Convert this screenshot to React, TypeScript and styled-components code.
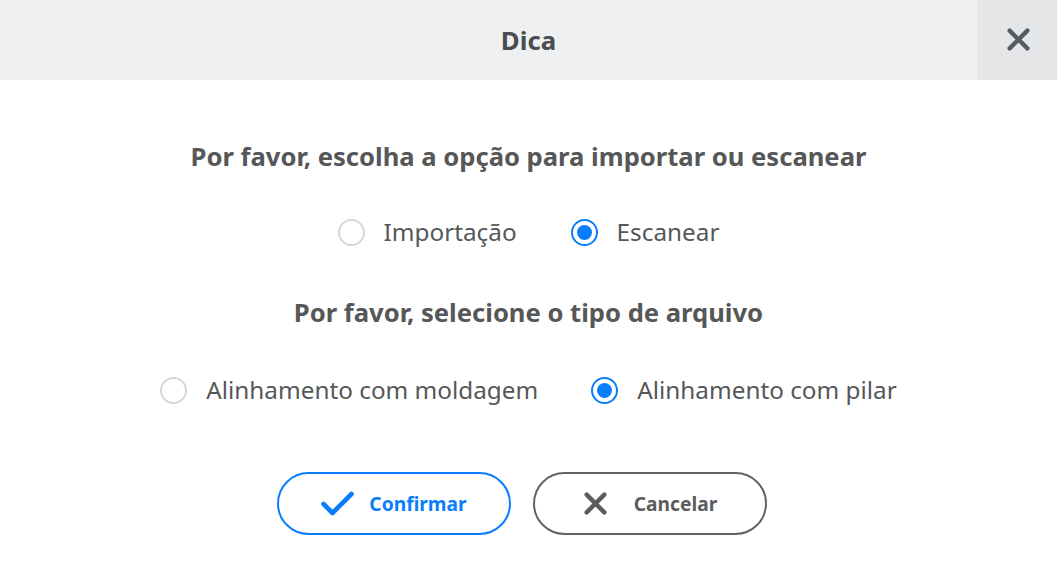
import React, { useState } from "react";
import styled, { createGlobalStyle } from "styled-components";

const Blue = "#0a7dfb";
const Text = "#555759";

const GlobalStyle = createGlobalStyle`
  html, body {
    margin: 0;
    padding: 0;
    background: #ffffff;
    font-family: "Noto Sans", "Open Sans", sans-serif;
  }
`;

const Dialog = styled.div`
  width: 1057px;
  height: 568px;
  display: flex;
  flex-direction: column;
  background: #ffffff;
`;

const Header = styled.div`
  height: 80px;
  display: flex;
  align-items: center;
  justify-content: center;
  position: relative;
  background: #eff0f2;
`;

const Title = styled.span`
  font-size: 25.8px;
  font-weight: 700;
  color: #4a4c4f;
`;

const CloseButton = styled.button`
  position: absolute;
  top: 0;
  right: 0;
  width: 80px;
  height: 80px;
  border: none;
  background: #e5e6e8;
  display: flex;
  align-items: center;
  justify-content: center;
  cursor: pointer;
  padding: 0 0 2px 2px;
`;

const Body = styled.div`
  display: flex;
  flex-direction: column;
  align-items: center;
  padding-top: 57px;
`;

const SectionTitle = styled.div<{ $mt?: number }>`
  font-size: 25.6px;
  font-weight: 700;
  color: ${Text};
  line-height: 40px;
  margin-top: ${(p) => p.$mt ?? 0}px;
`;

const RadioRow = styled.div<{ $gap: number; $mt: number }>`
  display: flex;
  align-items: center;
  gap: ${(p) => p.$gap}px;
  margin-top: ${(p) => p.$mt}px;
`;

const RadioLabel = styled.label`
  display: flex;
  align-items: center;
  gap: 19px;
  font-size: 24.3px;
  color: ${Text};
  cursor: pointer;
  line-height: 40px;
`;

const RadioCircle = styled.span<{ $checked: boolean }>`
  width: 27px;
  height: 27px;
  box-sizing: border-box;
  border-radius: 50%;
  border: 2px solid ${(p) => (p.$checked ? Blue : "#d4d6d9")};
  display: flex;
  align-items: center;
  justify-content: center;
  &::after {
    content: "";
    width: 15px;
    height: 15px;
    border-radius: 50%;
    background: ${Blue};
    display: ${(p) => (p.$checked ? "block" : "none")};
  }
`;

const Buttons = styled.div`
  display: flex;
  gap: 22px;
  margin-top: 62px;
  margin-right: 13px;
`;

const Button = styled.button<{ $primary?: boolean; $gap: number }>`
  width: 234px;
  height: 63px;
  box-sizing: border-box;
  border-radius: 32px;
  background: #ffffff;
  border: 2px solid ${(p) => (p.$primary ? Blue : "#5f6368")};
  color: ${(p) => (p.$primary ? Blue : "#5a5c5f")};
  font-family: inherit;
  font-size: 19.2px;
  font-weight: 700;
  display: flex;
  align-items: center;
  justify-content: center;
  gap: ${(p) => p.$gap}px;
  cursor: pointer;
  padding: 0;
`;

const Radio = ({
  label,
  checked,
  onClick,
}: {
  label: string;
  checked: boolean;
  onClick: () => void;
}) => (
  <RadioLabel onClick={onClick}>
    <RadioCircle $checked={checked} />
    {label}
  </RadioLabel>
);

const Cross = ({ color, size }: { color: string; size: number }) => (
  <svg width={size} height={size} viewBox="0 0 24 24">
    <path
      d="M3.5 3.5 L20.5 20.5 M20.5 3.5 L3.5 20.5"
      stroke={color}
      strokeWidth={4.2}
      strokeLinecap="round"
      fill="none"
    />
  </svg>
);

const Check = () => (
  <svg width="33" height="26" viewBox="0 0 33 26">
    <path
      d="M2.5 13 L11.5 22 L30.5 3"
      stroke={Blue}
      strokeWidth={4.6}
      strokeLinecap="round"
      strokeLinejoin="round"
      fill="none"
    />
  </svg>
);

export default function App() {
  const [mode, setMode] = useState("scan");
  const [kind, setKind] = useState("pilar");
  return (
    <>
      <GlobalStyle />
      <Dialog>
        <Header>
          <Title>Dica</Title>
          <CloseButton>
            <Cross color="#555b63" size={25} />
          </CloseButton>
        </Header>
        <Body>
          <SectionTitle>Por favor, escolha a opção para importar ou escanear</SectionTitle>
          <RadioRow $gap={54} $mt={35}>
            <Radio label="Importação" checked={mode === "import"} onClick={() => setMode("import")} />
            <Radio label="Escanear" checked={mode === "scan"} onClick={() => setMode("scan")} />
          </RadioRow>
          <SectionTitle $mt={41}>Por favor, selecione o tipo de arquivo</SectionTitle>
          <RadioRow $gap={53} $mt={37}>
            <Radio label="Alinhamento com moldagem" checked={kind === "molde"} onClick={() => setKind("molde")} />
            <Radio label="Alinhamento com pilar" checked={kind === "pilar"} onClick={() => setKind("pilar")} />
          </RadioRow>
          <Buttons>
            <Button $primary $gap={15}>
              <Check />
              Confirmar
            </Button>
            <Button $gap={26}>
              <Cross color="#5a5c5f" size={25} />
              Cancelar
            </Button>
          </Buttons>
        </Body>
      </Dialog>
    </>
  );
}
